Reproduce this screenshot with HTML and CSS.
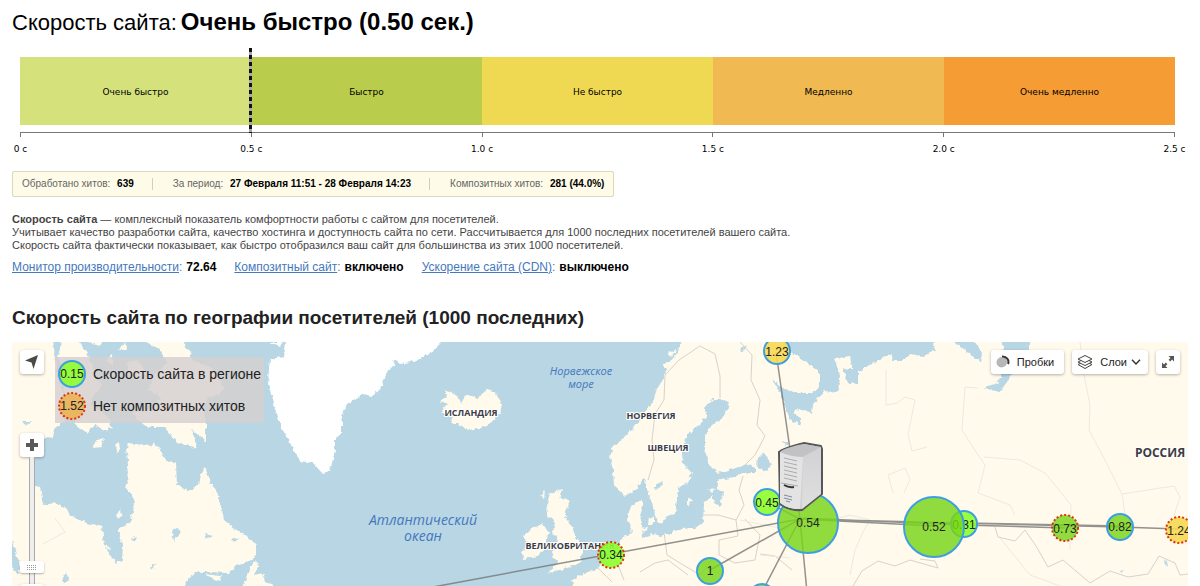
FILE: index.html
```html
<!DOCTYPE html>
<html lang="ru">
<head>
<meta charset="utf-8">
<meta name="viewport" content="width=device-width, initial-scale=1">
<title>Скорость сайта</title>
<link rel="stylesheet" href="styles.css">
</head>
<body>
<main class="page">
  <h1 class="title"><span>Скорость сайта:</span> <strong>Очень быстро (0.50 сек.)</strong></h1>

  <section class="scale" aria-label="Шкала скорости">
    <div class="scale-bar">
      <span class="seg seg-1">Очень быстро</span>
      <span class="seg seg-2">Быстро</span>
      <span class="seg seg-3">Не быстро</span>
      <span class="seg seg-4">Медленно</span>
      <span class="seg seg-5">Очень медленно</span>
      <i class="scale-marker" style="left:20%"></i>
    </div>
    <div class="axis">
      <span class="tick">0 с</span><span class="tick">0.5 с</span><span class="tick">1.0 с</span><span class="tick">1.5 с</span><span class="tick">2.0 с</span><span class="tick">2.5 с</span>
    </div>
  </section>

  <div class="stats">
    <span class="stat">Обработано хитов: <b>639</b></span>
    <span class="stat">За период: <b>27 Февраля 11:51 - 28 Февраля 14:23</b></span>
    <span class="stat">Композитных хитов: <b>281 (44.0%)</b></span>
  </div>

  <p class="about"><b>Скорость сайта</b> — комплексный показатель комфортности работы с сайтом для посетителей.<br>
  Учитывает качество разработки сайта, качество хостинга и доступность сайта по сети. Рассчитывается для 1000 последних посетителей вашего сайта.<br>
  Скорость сайта фактически показывает, как быстро отобразился ваш сайт для большинства из этих 1000 посетителей.</p>

  <div class="links">
    <span class="link"><span class="link-name"><a href="#monitor">Монитор производительности</a>:</span><b>72.64</b></span>
    <span class="link"><span class="link-name"><a href="#composite">Композитный сайт</a>:</span><b>включено</b></span>
    <span class="link"><span class="link-name"><a href="#cdn">Ускорение сайта (CDN)</a>:</span><b>выключено</b></span>
  </div>

  <h2 class="subtitle">Скорость сайта по географии посетителей (1000 последних)</h2>

  <section class="map" aria-label="Карта посетителей">
    <svg class="map-canvas" viewBox="12 342 1176 244" preserveAspectRatio="xMinYMin slice" role="img" aria-label="Скорость сайта по регионам">
      <defs>
        <filter id="coast" x="0" y="0" width="100%" height="100%">
          <feTurbulence type="fractalNoise" baseFrequency="0.22" numOctaves="2" seed="4"/>
          <feDisplacementMap in="SourceGraphic" scale="5" xChannelSelector="R" yChannelSelector="G"/>
        </filter>
        <linearGradient id="side" x1="0" x2="0" y1="0" y2="1"><stop offset="0" stop-color="#d2d2d4"/><stop offset="1" stop-color="#dfdfe0"/></linearGradient>
      </defs>
      <g filter="url(#coast)">
        <rect class="sea" x="-20" y="310" width="1260" height="310"/>
        <path class="land" d="M-10 320H50L54 348 55 362 58 378 63 394 61 410 65 420 54 430 52 437 44 439 36 444 32 460 31 485 40 487 43 505 55 503 66 509 72 517 87 523 102 526 104 545 110 555 116 563 122 560 123 545 118 530 130 522 135 505 133 495 125 487 129 478 127 468 128 460 126 450 128 443 137 444 150 446 153 442 160 450 166 460 176 463 177 485 188 491 199 485 202 470 205 467 210 480 218 495 222 510 224 520 235 529 247 536 256 546 256 556 248 562 236 566 228 573 210 572 195 572 186 582 178 610H-10Z"/>
        <path class="land" d="M256 560 250 567 246 578 238 610H285L275 586 266 582 262 574 254 576 259 564ZM206 574 220 576 221 581 212 579Z"/>
        <path class="land" d="M62 320H75L80 342 87 353 94 371 102 386 93 396 90 404 107 416 112 422 106 430 94 425 87 433 76 425 68 407 64 390 68 371 58 358 60 348Z"/>
        <path class="land" d="M148 320H176L183 343 189 350 193 360 210 367 222 382 222 393 208 398 203 407 206 423 206 442 198 435 191 429 198 449 177 442 164 427 148 427 137 419 132 412 153 410 160 397 148 390 153 377 167 363 160 350 147 342Z"/>
        <path class="land" d="M113 429 107 426 96 428 100 421 107 419ZM93 447 97 440 105 438 101 446ZM115 446 119 442 120 449 117 453ZM128 363 139 361 146 373 139 381 129 376ZM105 360 112 355 113 366ZM119 350 125 342 127 350ZM88 343 103 339 101 346ZM116 515 121 510 122 514 118 519ZM104 545 111 547 108 550Z"/>
        <path class="ice" d="M285 320V342L283 356 270 360 268 379 273 399 280 426 290 443 300 461 313 463 322 473 330 471 335 451 335 439 342 433 342 416 348 404 362 394 373 396 382 386 388 369 395 365 393 359 400 364 417 361 430 353 442 342 448 320Z"/>
        <path class="ice" d="M270 342 283 342 280 346Z"/>
        <path class="land" d="M440 401 447 396 445 389 457 396 462 403 465 394 477 398 488 389 495 393 502 403 500 414 487 426 470 431 458 424 450 424 453 418 442 411 448 404Z"/>
        <path class="land" d="M681 320V342L677 353 667 366 665 376 657 389 652 404 643 414 633 429 625 436 612 448 610 459 613 469 614 486 625 496 637 489 643 479 647 483 647 489 652 503 657 523 663 522 667 516 675 514 677 499 678 488 687 483 692 473 683 464 682 453 685 439 693 429 702 423 707 414 704 408 713 399 727 401 729 408 722 418 713 424 705 434 705 448 708 464 717 473 733 469 748 464 755 468 755 473 743 473 730 478 717 481 718 488 723 493 720 506 715 503 712 496 704 503 703 523 695 528 680 529 670 533 660 536 652 533 650 536 643 538 642 524 640 516 643 506 643 499 630 506 628 519 632 533 623 537 617 549 603 563 597 569 583 574 572 579 576 610H1240V320Z"/>
        <path class="land" d="M550 493 563 489 560 499 570 500 565 516 572 526 575 536 582 544 582 553 580 563 567 568 550 573 548 571 558 563 552 556 557 546 558 539 552 533 555 523 548 516 547 503ZM532 528 543 524 549 533 543 549 537 556 523 559 522 553 527 543 523 536ZM540 496 545 490 544 499ZM649 518 654 516 654 524 648 524ZM641 527 647 528 645 532ZM688 498 692 499 688 507ZM708 489 716 488 711 492ZM667 354 676 349 672 357ZM663 364 671 360 668 370Z"/>
        <path class="sea" d="M782 320V342L790 351 807 363 820 373 820 386 812 393 797 393 783 388 772 379 780 393 785 406 790 419 800 425 802 419 793 413 797 408 812 414 813 404 825 391 837 393 840 379 835 358 850 356 852 368 843 369 848 383 858 383 858 371 873 363 887 356 893 354 892 361 903 361 910 354 923 356 935 351 932 320ZM950 320 955 342 970 354 980 362 982 353 975 342ZM1000 320 1003 342 1003 373 997 383 983 388 1000 392 1004 386 1014 373 1014 362 1030 352 1030 320Z"/>
        <path class="land" d="M782 320V342L790 351 807 363 820 373 820 386 812 393 797 393 783 388 772 379 764 360V320Z"/>
        <path class="sea" d="M763 453 772 464 767 471 757 468 758 458ZM782 440 788 442 786 447ZM655 485 663 481 661 487 655 489ZM740 350 746 345 744 352ZM172 531 178 528 180 534 174 541ZM205 534 213 536 207 539ZM231 540 239 537 234 543ZM130 539 137 537 135 541ZM150 567 156 563 152 570ZM62 580 66 573 69 579 64 585ZM12 540 18 558 21 569 17 575 9 560ZM22 421 32 421 27 425ZM1120 569 1124 570 1121 573ZM1164 561 1168 560 1166 568Z"/>
      </g>
      <path class="border" d="M700 346 679 360 665 375 664 400 655 414 652 440 654 460 648 480M700 346 715 354 720 376 720 398M740 342 752 355 751 380 760 400 757 425 765 436 755 455 744 466M664 532 667 555 680 563 700 575 711 560M640 572 655 563 668 560 688 575M743 476 739 490 744 505 736 520 718 515 704 515M736 520 738 536 719 540 719 555 735 563 755 560 760 535 745 519M598 568 612 582M616 560 624 580M760 554 775 556 792 570"/>
      <path class="border" d="M853 586 862 571 878 561 895 566 910 560 938 568 935 561 920 559M995 527 998 537 1015 541 1025 530 1036 546 1048 567 1063 560 1090 583 1110 571 1128 577 1148 574 1159 556 1175 563 1180 575 1188 574"/>
      <path class="region" d="M55 518 65 532 43 544M886 370V405L897 403 905 397 915 400 908 435 912 451 927 447M978 388 965 387 962 430 978 455 985 465 978 493 1010 505 1015 515M1080 342 1085 380 1090 405 1089 430 1105 460 1115 480 1122 494 1160 488 1174 486 1180 497 1174 515M984 457 1020 460 1045 473 1063 495 1071 505 1070 550M893 493 888 475 905 468 910 479 904 493M828 521 850 515 870 520 863 532 855 550 850 575M1122 494 1127 527M1000 538 1030 575 1060 586M740 520 790 530 800 542M760 555 790 558"/>

      <g class="place">
        <text x="471" y="416">ИСЛАНДИЯ</text>
        <text x="651" y="419">НОРВЕГИЯ</text>
        <text x="668" y="451">ШВЕЦИЯ</text>
        <text x="570" y="549">ВЕЛИКОБРИТАНИЯ</text>
        <text class="place-big" x="1160" y="457">РОССИЯ</text>
      </g>
      <g class="water">
        <text x="581" y="375">Норвежское</text><text x="581" y="388">море</text>
        <text class="water-big" x="423" y="525">Атлантический</text><text class="water-big" x="423" y="541">океан</text>
      </g>

      <g class="routes">
        <path d="M776 352 800 519M611 554 800 519 433 587M800 519 710 570M800 519 762 592M800 519 807 592M767 502 800 519 935 526M800 518 964 525 1065 528M800 519 1120 527 1178 529M964 523 1120 526"/>
      </g>

      <g class="node">
        <circle class="yellow" cx="777" cy="351" r="13"/><text x="777" y="356">1.23</text>
        <circle class="lime" cx="767" cy="502" r="13"/><text x="767" y="507">0.45</text>
        <circle class="lime" cx="964" cy="524" r="13"/><text x="964" y="529">0.31</text>
        <circle class="green" cx="808" cy="523" r="30"/><text x="808" y="527">0.54</text>
        <circle class="green" cx="934" cy="527" r="30"/><text x="934" y="531">0.52</text>
        <circle class="lime dotted" cx="611" cy="555" r="13"/><text x="611" y="559">0.34</text>
        <circle class="green" cx="710" cy="571" r="13"/><text x="710" y="575">1</text>
        <circle class="green" cx="762" cy="597" r="13"/>
        <circle class="green dotted" cx="1065" cy="528" r="13"/><text x="1065" y="533">0.73</text>
        <circle class="green" cx="1120" cy="527" r="13"/><text x="1120" y="531">0.82</text>
        <circle class="yellow dotted" cx="1179" cy="530" r="13"/><text x="1179" y="535">1.24</text>
      </g>

      <g class="server">
        <path fill="#d0d0d2" stroke="#55575a" stroke-width="2" stroke-linejoin="round" d="M779 452C784 448 797 445 804 443L821 446 822 449V494L802 510Q789 511 780 504Z"/>
        <path fill="#c2c2c4" d="M780 452C784 448 797 445 804 444L821 447 803 457Q790 457 780 452Z"/>
        <path fill="url(#side)" d="M803 457 821 447V494L802 509Z"/>
        <path fill="#e3e3e4" d="M780 452Q790 457 803 457L800 509Q788 509 780 503Z"/>
        <path fill="none" stroke="#aaacae" d="M784 458 797 461M784 462 797 465M784 466 797 469M784 470 797 473M784 474 797 477M784 478 797 481M781 483 798 486"/>
        <path fill="none" stroke="#333" stroke-width="2" d="M784 485Q789 488 794 487"/>
        <path fill="none" stroke="#7e8c9e" d="M784 495 792 497M784 498 792 500M786 501 790 502"/>
      </g>
    </svg>

    <div class="map-ui">
      <div class="ui-left">
        <button class="ctl square" type="button" aria-label="Моё местоположение">
          <svg width="14" height="14" viewBox="0 0 14 14"><path fill="#4a4a4a" d="M13 0 8.500 14 6.500 7.500 0 5.500Z"/></svg>
        </button>
        <div class="zoom">
          <button class="ctl square" type="button" aria-label="Приблизить">
            <svg width="12" height="12" viewBox="0 0 12 12"><path fill="#5a5a5a" d="M4 0h4v4h4v4H8v4H4V8H0V4h4Z"/></svg>
          </button>
          <input class="zoom-range" type="range" min="0" max="100" value="10" aria-label="Масштаб">
          <button class="ctl square" type="button" aria-label="Отдалить">
            <svg width="12" height="12" viewBox="0 0 12 12"><path fill="#5a5a5a" d="M0 4h12v4H0Z"/></svg>
          </button>
        </div>
      </div>
      <ul class="legend">
        <li><svg class="node" width="30" height="30" viewBox="0 0 30 30"><circle class="lime" cx="15" cy="15" r="13"/><text x="15" y="19">0.15</text></svg><span>Скорость сайта в регионе</span></li>
        <li><svg class="node" width="30" height="30" viewBox="0 0 30 30"><circle class="orange dotted" cx="15" cy="15" r="13"/><text x="15" y="19">1.52</text></svg><span>Нет композитных хитов</span></li>
      </ul>
      <div class="ui-right">
        <button class="ctl" type="button">
          <svg width="14" height="14" viewBox="0 0 14 14"><circle cx="6" cy="7" r="5" fill="#b7b7b7"/><path fill="none" stroke="#333" stroke-width="2" d="M6 1.500A6 5.500 0 0 1 12 9"/><circle cx="5.500" cy="7.500" r="5" fill="#b7b7b7"/></svg>
          <span>Пробки</span>
        </button>
        <button class="ctl" type="button">
          <svg width="16" height="14" viewBox="0 0 16 14"><g fill="#fff" stroke="#444" stroke-linejoin="round"><path d="M1 9.500 8 13.500 15 9.500 8 6Z"/><path d="M1 7 8 10.500 15 7 8 3.500Z"/><path d="M1 4 8 7.500 15 4 8 .5Z"/></g></svg>
          <span>Слои</span>
          <svg class="chevron" width="10" height="6" viewBox="0 0 10 6"><path fill="none" stroke="#333" stroke-width="1.400" d="M1 .7 5 5 9 .7"/></svg>
        </button>
        <button class="ctl square" type="button" aria-label="На весь экран">
          <svg width="12" height="12" viewBox="0 0 12 12"><path fill="#555" d="M6.500 0H12V5.500L10 3.500 8.200 5.400 6.600 3.800 8.500 2ZM0 6.500 2 8.500 3.800 6.600 5.400 8.200 3.500 10 5.500 12H0Z"/></svg>
        </button>
      </div>
    </div>
  </section>
</main>
</body>
</html>
```
FILE: styles.css
```css
* { box-sizing: border-box; }

body {
  margin: 0;
  background: #fff;
  color: #000;
  font-family: "Liberation Sans", Arial, sans-serif;
}

.page {
  display: flex;
  flex-direction: column;
  align-items: stretch;
  min-height: 100vh;
  padding: 8px 12px 0;
}

.title {
  display: flex;
  flex-wrap: wrap;
  align-items: baseline;
  gap: 4px;
  margin: 0;
  font-size: 22px;
  line-height: 28px;
  font-weight: 400;
}

.title strong { font-size: 24px; }

/* Speed scale */
.scale {
  padding: 20px 13px 0 8px;
  font-family: "DejaVu Sans", Verdana, sans-serif;
  font-size: 9px;
  line-height: 12px;
}

.scale-bar {
  position: relative;
  display: grid;
  grid-template-columns: repeat(5, 1fr);
  height: 68px;
}

.seg {
  display: flex;
  align-items: center;
  justify-content: center;
  padding-top: 1px;
}

.seg-1 { background: #d5e27c; }
.seg-2 { background: #bacc4b; }
.seg-3 { background: #f0d952; }
.seg-4 { background: #f0b951; }
.seg-5 { background: #f59c35; }

.scale-marker {
  position: absolute;
  top: -9px;
  bottom: -8px;
  width: 3px;
  margin-left: -2px;
  background: repeating-linear-gradient(#111 0 4px, #aaa 4px 7px);
}

.axis {
  display: flex;
  justify-content: space-between;
  margin-top: 7px;
  border-top: 1px solid #777;
}

.tick {
  display: flex;
  flex-direction: column;
  align-items: center;
  gap: 6px;
  width: 1px;
  white-space: nowrap;
}

.tick::before {
  content: "";
  width: 1px;
  height: 4px;
  background: #777;
}

/* Counters */
.stats {
  display: flex;
  align-self: flex-start;
  margin-top: 16px;
  padding: 6px 9px;
  border: 1px solid #dcd9b8;
  border-radius: 2px;
  background: #fefbe8;
  color: #666;
  font-size: 10px;
  line-height: 12px;
}

.stat + .stat {
  margin-left: 18px;
  padding-left: 20px;
  border-left: 1px solid #d2d0bd;
}

.stat b {
  margin-left: 4px;
  color: #000;
}

.about {
  margin: 16px 0 0;
  color: #444;
  font-size: 11px;
  line-height: 13px;
}

.links {
  display: flex;
  flex-wrap: wrap;
  gap: 18px;
  margin-top: 8px;
  font-size: 12px;
  line-height: 14px;
}

.link {
  display: flex;
  gap: 4px;
}

.link-name,
.link a { color: #4479bd; }

.subtitle {
  margin: 33px 0 13px;
  color: #222;
  font-size: 19px;
  line-height: 22px;
}

/* Map */
.map {
  position: relative;
  flex: 1;
  display: grid;
  min-height: 244px;
  overflow: hidden;
  background: #b8d6e4;
}

.map-canvas {
  display: block;
  width: 100%;
  height: 100%;
}

.sea { fill: #b8d6e4; }
.land { fill: #fffaeb; }
.ice { fill: #fff; }

.border,
.region {
  fill: none;
  stroke: #d8d2cc;
  stroke-linejoin: round;
}

.region { stroke: #ece9e0; }

.place,
.water,
.node { text-anchor: middle; }

.place {
  fill: #3c3c44;
  stroke: #fff;
  stroke-width: 2px;
  paint-order: stroke;
  font: 700 9px "Open Sans", sans-serif;
}

.place-big { font-size: 12px; }

.water {
  fill: #4677bd;
  font: italic 500 11px "Open Sans", sans-serif;
}

.water-big { font-size: 14px; }

.routes {
  fill: none;
  stroke: #777;
  stroke-opacity: .8;
  stroke-width: 1.5;
}

.node circle {
  stroke: #3d9fe0;
  stroke-width: 2;
}

.node text {
  fill: #222;
  font: 12px "Liberation Sans", Arial, sans-serif;
}

.node .lime { fill: rgba(140, 255, 45, .9); }
.node .green { fill: rgba(120, 213, 25, .82); }
.node .yellow { fill: rgba(246, 216, 82, .9); }
.node .orange { fill: #ebb661; }

.node .dotted {
  stroke: #dc3518;
  stroke-dasharray: 2 2;
}

/* Map controls lie over the canvas */
.map-ui {
  position: absolute;
  inset: 0;
  display: flex;
  align-items: flex-start;
  padding: 8px 8px 0;
  overflow: hidden;
}

.ui-left {
  display: flex;
  flex-direction: column;
  gap: 59px;
}

.ctl {
  display: flex;
  align-items: center;
  justify-content: center;
  gap: 7px;
  height: 24px;
  padding: 0 10px 0 5px;
  border: 0;
  border-radius: 3px;
  background: #fff;
  color: #222;
  box-shadow: 0 1px 3px rgba(0, 0, 0, .3);
  font: 11px "Liberation Sans", Arial, sans-serif;
}

.ctl.square {
  width: 24px;
  padding: 0;
}

.ctl .chevron { margin: 0 -3px; }

.zoom {
  display: flex;
  flex-direction: column;
}

.zoom-range {
  appearance: none;
  writing-mode: vertical-lr;
  direction: rtl;
  width: 24px;
  height: 127px;
  margin: 0;
  background: linear-gradient(90deg, transparent 9px, #aaa 9px 10px, #eee 10px 14px, #aaa 14px 15px, transparent 15px);
}

.zoom-range::-webkit-slider-thumb {
  appearance: none;
  width: 24px;
  height: 12px;
  border-radius: 2px;
  background:
    repeating-linear-gradient(90deg, transparent 0 1px, #fff 1px 2px) 7px 4px / 10px 5px no-repeat,
    repeating-linear-gradient(#999 0 1px, #fff 1px 2px) 7px 4px / 10px 5px no-repeat,
    #fff;
  box-shadow: 0 1px 2px rgba(0, 0, 0, .3);
}

.legend {
  display: flex;
  flex-direction: column;
  gap: 2px;
  margin: 7px 0 0 11px;
  padding: 2px 3px 2px 2px;
  list-style: none;
  background: rgba(213, 208, 208, .82);
  color: #222;
  font-size: 14px;
  line-height: 16px;
}

.legend li {
  display: flex;
  align-items: center;
  gap: 6px;
}

.ui-right {
  display: flex;
  gap: 8px;
  margin-left: auto;
}
```
